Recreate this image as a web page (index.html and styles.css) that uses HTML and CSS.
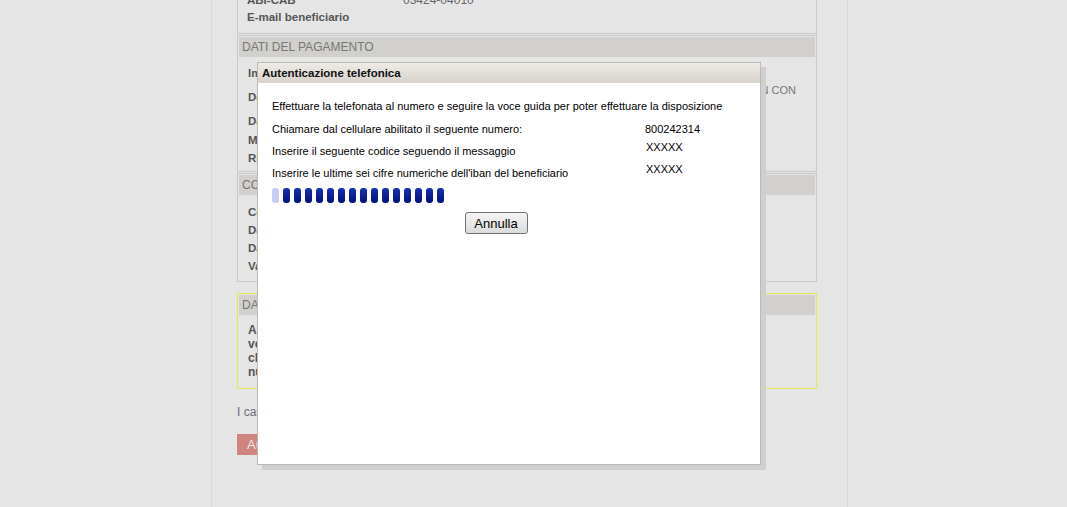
FILE: index.html
```html
<!DOCTYPE html>
<html lang="it">
<head>
    <meta charset="UTF-8">
    <title>Autenticazione telefonica</title>
    <link rel="stylesheet" href="styles.css">
</head>
<body>
    <div class="page">
        <div class="box box-top">
            <div class="row"><span class="label">ABI-CAB</span><span class="value">03424-04010</span></div>
            <div class="row"><span class="label">E-mail beneficiario</span><span class="value"></span></div>
        </div>

        <div class="box box-pay">
            <div class="box-head">Dati del pagamento</div>
            <div class="box-body">
                <div class="row r20"><span class="label">Importo</span><span class="value">1.000,00 EUR</span></div>
                <div class="row r28">
                    <span class="label">Descrizione</span>
                    <span class="value desc"><span class="desc-line">BONIFICO DISPOSTO TRAMITE LOGIN CON</span><span class="desc-line">SMS</span></span>
                </div>
                <div class="row r20"><span class="label">Data esecuzione</span><span class="value">12/03/2013</span></div>
                <div class="row r18"><span class="label">Modalità</span><span class="value">Ordinario</span></div>
                <div class="row r18"><span class="label">Riferimento</span><span class="value"></span></div>
            </div>
        </div>

        <div class="box box-acc">
            <div class="box-head">Conto di addebito</div>
            <div class="box-body">
                <div class="row r18"><span class="label">Conto</span></div>
                <div class="row r18"><span class="label">Data contabile</span></div>
                <div class="row r18"><span class="label">Data valuta</span></div>
                <div class="row r18"><span class="label">Valuta</span></div>
            </div>
        </div>

        <div class="box box-note">
            <div class="box-head">Dati di autorizzazione</div>
            <p class="note">Al fine di completare l'operazione<br>verrai guidato nella telefonata<br>che ti permetterà di confermare il<br>numero</p>
        </div>

        <p class="legend">I campi contrassegnati sono obbligatori</p>
        <button class="submit">Autorizza</button>
    </div>

    <div class="dialog">
        <div class="dialog-title">Autenticazione telefonica</div>
        <div class="dialog-body">
            <div class="dialog-inner">
                <p class="intro">Effettuare la telefonata al numero e seguire la voce guida per poter effettuare la disposizione</p>
                <div class="steps">
                    <span class="step">Chiamare dal cellulare abilitato il seguente numero:</span>
                    <span class="num">800242314</span>
                    <span class="step">Inserire il seguente codice seguendo il messaggio</span>
                    <span class="code">XXXXX</span>
                    <span class="step">Inserire le ultime sei cifre numeriche dell'iban del beneficiario</span>
                    <span class="code">XXXXX</span>
                </div>
                <div class="progress">
                    <span class="tick done"></span>
                    <span class="tick"></span><span class="tick"></span><span class="tick"></span>
                    <span class="tick"></span><span class="tick"></span><span class="tick"></span>
                    <span class="tick"></span><span class="tick"></span><span class="tick"></span>
                    <span class="tick"></span><span class="tick"></span><span class="tick"></span>
                    <span class="tick"></span><span class="tick"></span><span class="tick"></span>
                </div>
                <div class="actions">
                    <button class="cancel">Annulla</button>
                </div>
            </div>
        </div>
    </div>
</body>
</html>
```

FILE: styles.css
```css
body {
    margin: 0;
    height: 507px;
    overflow: hidden;
    background: #e5e5e5;
    font-family: "Liberation Sans", Arial, sans-serif;
    font-size: 12px;
    color: #555;
}

.page {
    display: flow-root;
    margin-left: 211px;
    width: 580px;
    height: 507px;
    padding: 0 30px 0 25px;
    border-left: 1px solid #dadada;
    border-right: 1px solid #dadada;
}

.box {
    border: 1px solid #c9c9c9;
    padding: 1px;
}

.box-top {
    margin-top: -9px;
    padding: 0 0 7px;
}

.box-top .row {
    height: 17px;
    line-height: 17px;
}

.box-pay {
    margin-top: 1px;
    padding-bottom: 4px;
}

.box-acc {
    margin-top: 1px;
    padding-bottom: 6px;
}

.box-note {
    margin-top: 11px;
    border-color: #e6e650;
    padding-bottom: 9px;
}

.box-head {
    height: 20px;
    line-height: 20px;
    padding-left: 3px;
    background: #d1d0cc;
    color: #777;
    text-transform: uppercase;
}

.box-pay .box-body {
    padding-top: 6px;
}

.box-acc .box-body {
    padding-top: 8px;
}

.row {
    display: flex;
    align-items: center;
    padding-left: 9px;
}

.r20 { height: 20px; }
.r28 { height: 28px; }
.r18 { height: 18px; }

.label {
    width: 156px;
    font-size: 11.5px;
    font-weight: bold;
    color: #555;
}

.value {
    flex: 1;
    color: #666;
}

.desc {
    display: flex;
    flex-direction: column;
    line-height: 14px;
    padding-right: 19px;
    font-size: 11px;
    color: #777;
}

.desc-line:first-child {
    text-align: right;
}

.note {
    margin: 8px 0 0 9px;
    line-height: 14px;
    font-weight: bold;
    color: #555;
}

.legend {
    margin: 16px 0 0;
    line-height: 14px;
    color: #6e6e7e;
}

.submit {
    display: block;
    margin-top: 15px;
    height: 21px;
    padding: 0 10px;
    border: 0;
    background: #d08480;
    color: #f4e4e2;
    font-family: inherit;
    font-size: 13px;
}

/* dialog sits over the dimmed page */
.dialog {
    position: absolute;
    left: 257px;
    top: 62px;
    width: 504px;
    height: 403px;
    box-sizing: border-box;
    border: 1px solid #bfb9b1;
    background: #fff;
    box-shadow: 5px 5px 0 #cfcfcf;
}

.dialog-title {
    height: 20px;
    line-height: 20px;
    padding-left: 4px;
    background: linear-gradient(#eeebe7, #d7d2ca);
    font-size: 11.5px;
    font-weight: bold;
    color: #111;
}

.dialog-body {
    padding: 16px 0 0 14px;
    font-size: 11px;
    color: #000;
}

.dialog-inner {
    width: 448px;
}

.intro {
    margin: 0;
    line-height: 14px;
    white-space: nowrap;
}

.steps {
    display: grid;
    grid-template-columns: 373px auto;
    grid-auto-rows: 22px;
    margin-top: 5px;
}

.step, .num {
    line-height: 22px;
    white-space: nowrap;
}

.code {
    line-height: 14px;
    font-size: 11px;
    padding-left: 1px;
}

.progress {
    display: flex;
    gap: 4px;
    margin-top: 4px;
}

.tick {
    width: 7px;
    height: 15px;
    border-radius: 3px;
    background: linear-gradient(#1530b0, #001080);
}

.tick.done {
    background: #c5cdf5;
}

.actions {
    margin-top: 9px;
    text-align: center;
}

.cancel {
    width: 63px;
    height: 22px;
    padding: 0;
    border: 1px solid #707070;
    border-radius: 3px;
    background: linear-gradient(#f4f4f4, #dcdcdc);
    font-family: inherit;
    font-size: 13px;
    color: #000;
}
```
